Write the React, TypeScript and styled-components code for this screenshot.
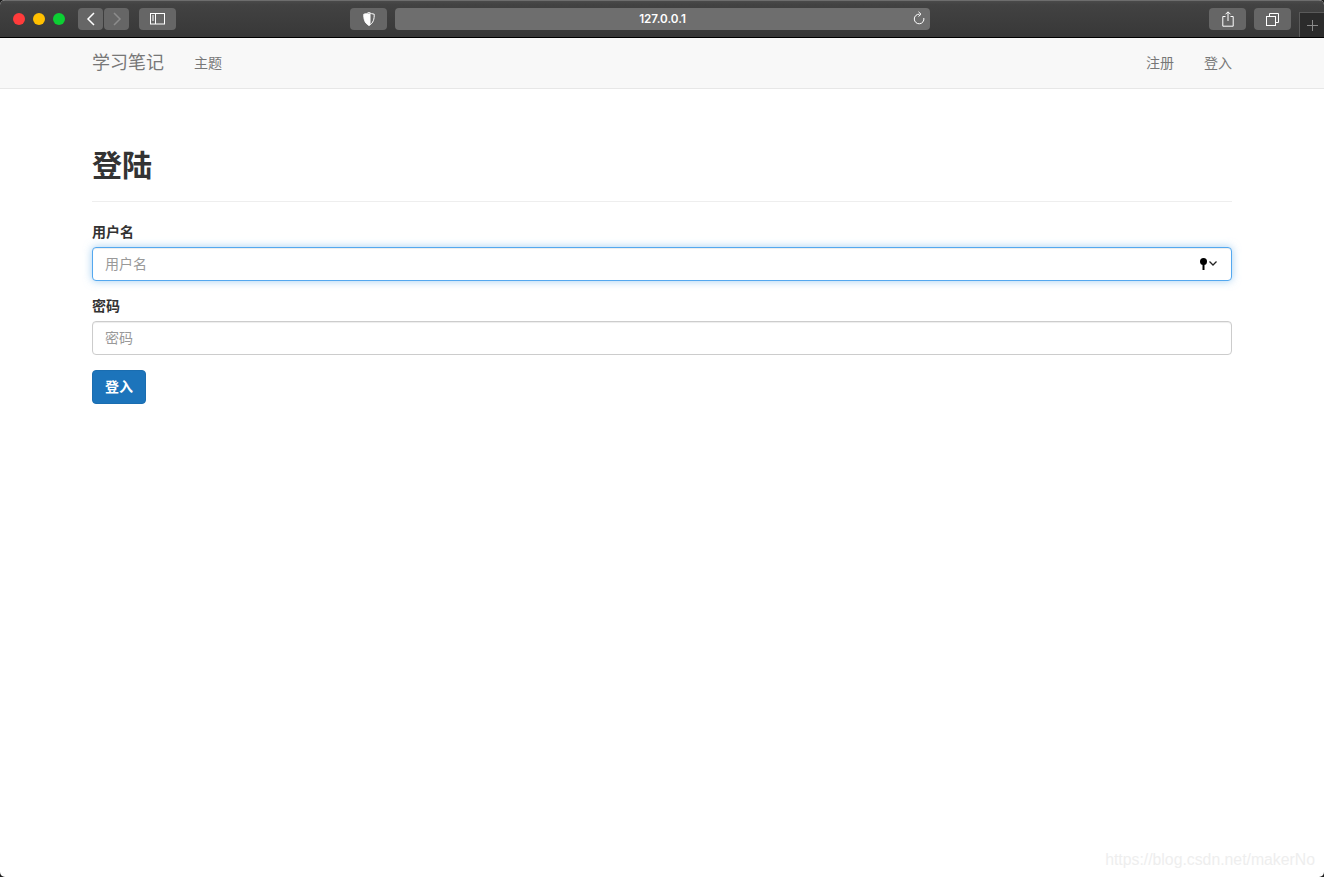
import React from "react";
import styled, { createGlobalStyle } from "styled-components";

const GlobalStyle = createGlobalStyle`
    html, body {
        margin: 0;
        padding: 0;
        height: 100%;
        background: #1e1e1e;
    }

    body {
        font-family: "Liberation Sans", "Noto Sans CJK SC", sans-serif;
        font-size: 14px;
        color: #333333;
    }
`;

export default function App() {
    return (
        <>
            <GlobalStyle />
            <Page>
                <TitleBar>
                    <Lights>
                        <Light color="#ff3b3b" />
                        <Light color="#ffc000" />
                        <Light color="#0ccf33" />
                    </Lights>
                    <NavPair>
                        <ToolButton width={25}>
                            <svg width="10" height="14" viewBox="0 0 10 14" fill="none" stroke="#ffffff" strokeWidth="1.5">
                                <path d="M8 1L2 7l6 6" />
                            </svg>
                        </ToolButton>
                        <ToolButton width={25}>
                            <svg width="10" height="14" viewBox="0 0 10 14" fill="none" stroke="#8c8c8c" strokeWidth="1.5">
                                <path d="M2 1l6 6-6 6" />
                            </svg>
                        </ToolButton>
                    </NavPair>
                    <SidebarButton width={37}>
                        <svg width="15" height="12" viewBox="0 0 15 12" fill="none" stroke="#ffffff" strokeWidth="1">
                            <rect x="0.5" y="0.5" width="14" height="10.5" />
                            <path d="M5.5 0.5v10.5M2 3h2M2 5h2M2 7h2" />
                        </svg>
                    </SidebarButton>
                    <ShieldButton width={37}>
                        <svg width="12" height="14" viewBox="0 0 12 14">
                            <path d="M6 .5C4.5 1.5 2.5 2 .8 2.2c-.2 4.500.8 9 5.200 11.300 4.400-2.300 5.400-6.800 5.200-11.300C9.500 2 7.500 1.500 6 .5z" fill="none" stroke="#ffffff" strokeWidth="1" />
                            <path d="M7.500 1.200C5.500 1.500 2.500 2 .8 2.200c-.2 4.500.8 9 5.200 11.300 1-.5 1.500-1 1.500-1z" fill="#ffffff" />
                        </svg>
                    </ShieldButton>
                    <AddressBar>
                        <AddressText>127.0.0.1</AddressText>
                        <ReloadIcon width="14" height="15" viewBox="0 0 14 15" fill="none" stroke="#ffffff" strokeWidth="1">
                            <path d="M7.500 3.200A4.800 4.800 0 1 0 11.800 7" />
                            <path d="M6.500 .8l2.500 2.400-2.500 2.300" />
                        </ReloadIcon>
                    </AddressBar>
                    <RightTools>
                        <ToolButton width={37}>
                            <svg width="12" height="16" viewBox="0 0 12 16" fill="none" stroke="#ffffff" strokeWidth="1">
                                <path d="M3.500 5.500H.8v9.700h10.400V5.500H8.500M6 10V1M3.500 3.300L6 .8l2.500 2.500" />
                            </svg>
                        </ToolButton>
                        <ToolButton width={37}>
                            <svg width="13" height="13" viewBox="0 0 13 13" fill="none" stroke="#ffffff" strokeWidth="1">
                                <rect x="0.5" y="3.500" width="9" height="9" />
                                <path d="M3.500 3.500V.5h9v9h-3" />
                            </svg>
                        </ToolButton>
                    </RightTools>
                    <NewTab>
                        <svg width="11" height="11" viewBox="0 0 11 11" stroke="#8a8a8a" strokeWidth="1">
                            <path d="M5.500 0v11M0 5.500h11" />
                        </svg>
                    </NewTab>
                </TitleBar>

                <Navbar>
                    <NavContent>
                        <NavLeft>
                            <Brand>学习笔记</Brand>
                            <NavLink>主题</NavLink>
                        </NavLeft>
                        <NavRight>
                            <NavLink>注册</NavLink>
                            <NavLink>登入</NavLink>
                        </NavRight>
                    </NavContent>
                </Navbar>

                <Main>
                    <PageHeader>
                        <Title>登陆</Title>
                    </PageHeader>
                    <form onSubmit={(e) => e.preventDefault()}>
                        <FormGroup>
                            <Label>用户名</Label>
                            <InputWrap>
                                <Input focused placeholder="用户名" />
                                <KeyHint>
                                    <svg width="20" height="14" viewBox="0 0 20 14">
                                        <circle cx="4.500" cy="4.500" r="3.500" fill="#000000" />
                                        <rect x="3.500" y="6" width="2" height="7" fill="#000000" />
                                        <path d="M10.500 4.500l3.500 3.500 3.500-3.500" fill="none" stroke="#222222" strokeWidth="1.300" />
                                    </svg>
                                </KeyHint>
                            </InputWrap>
                        </FormGroup>
                        <FormGroup>
                            <Label>密码</Label>
                            <Input placeholder="密码" />
                        </FormGroup>
                        <SubmitButton type="submit">登入</SubmitButton>
                    </form>
                </Main>

                <Watermark>https://blog.csdn.net/makerNo</Watermark>
            </Page>
        </>
    );
}

const Page = styled.div`
    position: relative;
    height: 877px;
    overflow: hidden;
    border-radius: 5px;
    background: #ffffff;
`;

const TitleBar = styled.div`
    height: 36px;
    display: flex;
    align-items: flex-start;
    background: linear-gradient(#4a4a4a 0, #424242 10%, #383838 100%);
    border-top: 1px solid #6d6d6d;
    border-bottom: 1px solid #000000;
`;

const Lights = styled.div`
    display: flex;
    gap: 8px;
    margin: 12px 0 0 13px;
`;

const Light = styled.span<{ color: string }>`
    width: 12px;
    height: 12px;
    border-radius: 50%;
    background: ${(props) => props.color};
`;

const NavPair = styled.div`
    display: flex;
    gap: 1px;
    margin: 7px 0 0 13px;
`;

const ToolButton = styled.div<{ width: number }>`
    width: ${(props) => props.width}px;
    height: 22px;
    border-radius: 4px;
    background: #666666;
    display: flex;
    align-items: center;
    justify-content: center;
`;

const SidebarButton = styled(ToolButton)`
    margin: 7px 0 0 10px;
`;

const ShieldButton = styled(ToolButton)`
    margin: 7px 0 0 174px;
`;

const AddressBar = styled.div`
    position: relative;
    width: 535px;
    height: 22px;
    margin: 7px 0 0 8px;
    border-radius: 4px;
    background: #6e6e6e;
    display: flex;
    align-items: center;
    justify-content: center;
`;

const AddressText = styled.span`
    color: #ffffff;
    font-family: Inter, "Liberation Sans", sans-serif;
    font-size: 11.7px;
    font-weight: 600;
`;

const ReloadIcon = styled.svg`
    position: absolute;
    right: 4px;
    top: 3px;
`;

const RightTools = styled.div`
    display: flex;
    gap: 8px;
    margin: 7px 0 0 279px;
`;

const NewTab = styled.div`
    width: 25px;
    height: 25px;
    margin: 11px 0 0 8px;
    box-sizing: border-box;
    border: 1px solid #5a5a5a;
    border-right: none;
    border-bottom: none;
    background: #2b2b2b;
    display: flex;
    align-items: center;
    justify-content: center;
`;

const Navbar = styled.nav`
    height: 50px;
    background: #f8f8f8;
    border-bottom: 1px solid #e7e7e7;
`;

const NavContent = styled.div`
    width: 1140px;
    height: 100%;
    margin-left: 92px;
    display: flex;
    align-items: center;
    justify-content: space-between;
`;

const NavLeft = styled.div`
    display: flex;
    align-items: center;
    gap: 30px;
`;

const NavRight = styled.div`
    display: flex;
    align-items: center;
    gap: 30px;
`;

const Brand = styled.a`
    font-size: 18px;
    line-height: 20px;
    color: #777777;
`;

const NavLink = styled.a`
    font-size: 14px;
    line-height: 20px;
    color: #777777;
`;

const Main = styled.main`
    width: 1140px;
    margin-left: 92px;
    padding-top: 60px;
`;

const PageHeader = styled.div`
    margin-bottom: 20px;
    padding-bottom: 19px;
    border-bottom: 1px solid #eeeeee;
`;

const Title = styled.h1`
    margin: 0;
    font-size: 30px;
    line-height: 33px;
    font-weight: 700;
    color: #333333;
`;

const FormGroup = styled.div`
    margin-bottom: 15px;
`;

const Label = styled.label`
    display: block;
    margin-bottom: 5px;
    font-size: 14px;
    line-height: 20px;
    font-weight: 700;
    color: #333333;
`;

const InputWrap = styled.div`
    position: relative;
`;

const Input = styled.input<{ focused?: boolean }>`
    display: block;
    width: 100%;
    height: 34px;
    box-sizing: border-box;
    padding: 6px 12px;
    font-family: inherit;
    font-size: 14px;
    line-height: 20px;
    color: #555555;
    background: #ffffff;
    border-radius: 4px;
    outline: none;
    border: 1px solid ${(props) => (props.focused ? "#54a8ef" : "#cccccc")};
    box-shadow: ${(props) =>
        props.focused
            ? "inset 0 1px 1px rgba(0,0,0,.075), 0 0 8px rgba(102,175,233,.6)"
            : "inset 0 1px 1px rgba(0,0,0,.075)"};

    &::placeholder {
        color: #999999;
        opacity: 1;
    }
`;

const KeyHint = styled.span`
    position: absolute;
    right: 13px;
    top: 10px;
    display: flex;
`;

const SubmitButton = styled.button`
    display: block;
    width: 54px;
    height: 34px;
    padding: 0 0 2px;
    font-family: inherit;
    font-size: 14px;
    font-weight: 700;
    color: #ffffff;
    background: #1c74bb;
    border: 1px solid #1a6db0;
    border-radius: 4px;
`;

const Watermark = styled.span`
    position: absolute;
    right: 9px;
    bottom: 8px;
    font-size: 15.8px;
    color: #eeeeee;
`;
